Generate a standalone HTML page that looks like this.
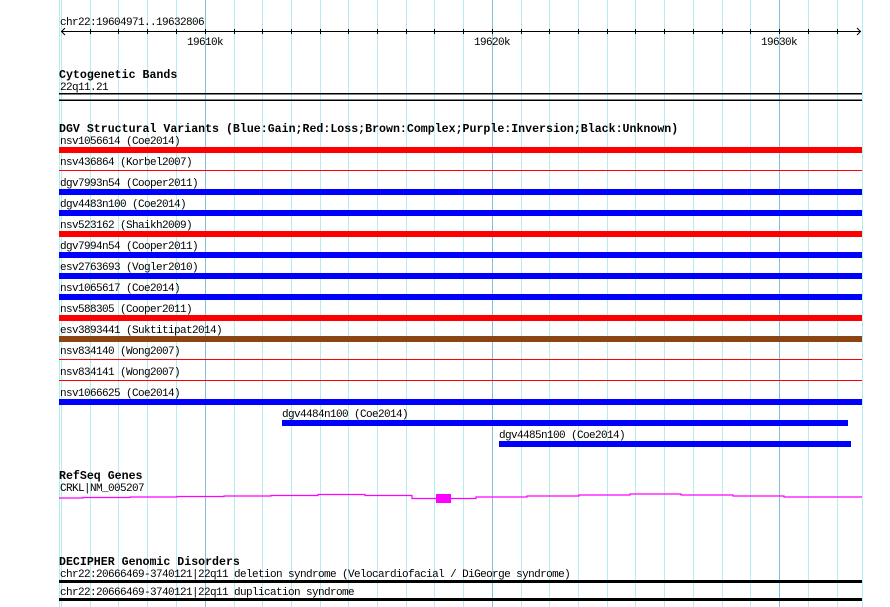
<!DOCTYPE html>
<html><head><meta charset="utf-8"><style>
html,body{margin:0;padding:0;background:#fff;width:890px;height:607px;overflow:hidden}
svg{display:block}
text{font-family:"Liberation Mono",monospace;font-size:11px;letter-spacing:-0.6px;fill:#000}
.b{font-weight:bold;font-size:11.6px;letter-spacing:0}
</style></head><body>
<svg width="890" height="607" xmlns="http://www.w3.org/2000/svg">
<g stroke="#b4ecf0" stroke-width="1">
<line x1="59.5" y1="0" x2="59.5" y2="607"/>
<line x1="61.5" y1="0" x2="61.5" y2="607"/>
<line x1="90.5" y1="0" x2="90.5" y2="607"/>
<line x1="118.5" y1="0" x2="118.5" y2="607"/>
<line x1="147.5" y1="0" x2="147.5" y2="607"/>
<line x1="176.5" y1="0" x2="176.5" y2="607"/>
<line x1="234.5" y1="0" x2="234.5" y2="607"/>
<line x1="262.5" y1="0" x2="262.5" y2="607"/>
<line x1="291.5" y1="0" x2="291.5" y2="607"/>
<line x1="320.5" y1="0" x2="320.5" y2="607"/>
<line x1="348.5" y1="0" x2="348.5" y2="607"/>
<line x1="377.5" y1="0" x2="377.5" y2="607"/>
<line x1="406.5" y1="0" x2="406.5" y2="607"/>
<line x1="434.5" y1="0" x2="434.5" y2="607"/>
<line x1="463.5" y1="0" x2="463.5" y2="607"/>
<line x1="521.5" y1="0" x2="521.5" y2="607"/>
<line x1="549.5" y1="0" x2="549.5" y2="607"/>
<line x1="578.5" y1="0" x2="578.5" y2="607"/>
<line x1="607.5" y1="0" x2="607.5" y2="607"/>
<line x1="635.5" y1="0" x2="635.5" y2="607"/>
<line x1="664.5" y1="0" x2="664.5" y2="607"/>
<line x1="693.5" y1="0" x2="693.5" y2="607"/>
<line x1="722.5" y1="0" x2="722.5" y2="607"/>
<line x1="750.5" y1="0" x2="750.5" y2="607"/>
<line x1="808.5" y1="0" x2="808.5" y2="607"/>
<line x1="837.5" y1="0" x2="837.5" y2="607"/>
<line x1="862.5" y1="0" x2="862.5" y2="607"/>
</g>
<g stroke="#80c0e0" stroke-width="1">
<line x1="205.5" y1="0" x2="205.5" y2="607"/>
<line x1="492.5" y1="0" x2="492.5" y2="607"/>
<line x1="779.5" y1="0" x2="779.5" y2="607"/>
</g>
<text x="60" y="25">chr22:19604971..19632806</text>
<g stroke="#000" stroke-width="1" fill="none">
<line x1="61" y1="31.5" x2="861" y2="31.5"/>
<polyline points="65,28 61.5,31.5 65,35"/>
<polyline points="857,28 860.5,31.5 857,35"/>
<path d="M90.5 29v5M118.5 29v5M147.5 29v5M176.5 29v5M205.5 29v5M234.5 29v5M262.5 29v5M291.5 29v5M320.5 29v5M348.5 29v5M377.5 29v5M406.5 29v5M434.5 29v5M463.5 29v5M492.5 29v5M521.5 29v5M549.5 29v5M578.5 29v5M607.5 29v5M635.5 29v5M664.5 29v5M693.5 29v5M722.5 29v5M750.5 29v5M779.5 29v5M808.5 29v5M837.5 29v5"/>
</g>
<text x="187" y="45">19610k</text>
<text x="474" y="45">19620k</text>
<text x="761" y="45">19630k</text>
<text class="b" x="59" y="78">Cytogenetic Bands</text>
<text x="60" y="90">22q11.21</text>
<rect x="59" y="93" width="803" height="1.5" fill="#000"/>
<rect x="59" y="99.5" width="803" height="1.5" fill="#000"/>
<text class="b" x="59" y="132">DGV Structural Variants (Blue:Gain;Red:Loss;Brown:Complex;Purple:Inversion;Black:Unknown)</text>
<text x="60" y="144">nsv1056614 (Coe2014)</text><rect x="59" y="147" width="803" height="6" fill="#f00"/>
<text x="60" y="165">nsv436864 (Korbel2007)</text><rect x="59" y="170" width="803" height="1" fill="#f00"/>
<text x="60" y="186">dgv7993n54 (Cooper2011)</text><rect x="59" y="189" width="803" height="6" fill="#00f"/>
<text x="60" y="207">dgv4483n100 (Coe2014)</text><rect x="59" y="210" width="803" height="6" fill="#00f"/>
<text x="60" y="228">nsv523162 (Shaikh2009)</text><rect x="59" y="231" width="803" height="6" fill="#f00"/>
<text x="60" y="249">dgv7994n54 (Cooper2011)</text><rect x="59" y="252" width="803" height="6" fill="#00f"/>
<text x="60" y="270">esv2763693 (Vogler2010)</text><rect x="59" y="273" width="803" height="6" fill="#00f"/>
<text x="60" y="291">nsv1065617 (Coe2014)</text><rect x="59" y="294" width="803" height="6" fill="#00f"/>
<text x="60" y="312">nsv588305 (Cooper2011)</text><rect x="59" y="315" width="803" height="6" fill="#f00"/>
<text x="60" y="333">esv3893441 (Suktitipat2014)</text><rect x="59" y="336" width="803" height="6" fill="#8b4513"/>
<text x="60" y="354">nsv834140 (Wong2007)</text><rect x="59" y="359" width="803" height="1" fill="#f00"/>
<text x="60" y="375">nsv834141 (Wong2007)</text><rect x="59" y="380" width="803" height="1" fill="#f00"/>
<text x="60" y="396">nsv1066625 (Coe2014)</text><rect x="59" y="399" width="803" height="6" fill="#00f"/>
<text x="282" y="417">dgv4484n100 (Coe2014)</text><rect x="282" y="420" width="566" height="6" fill="#00f"/>
<text x="499" y="438">dgv4485n100 (Coe2014)</text><rect x="499" y="441" width="352" height="6" fill="#00f"/>
<text class="b" x="59" y="479">RefSeq Genes</text>
<text x="60" y="491">CRKL|NM_005207</text>
<polyline fill="none" stroke="#f0f" stroke-width="1.2" points="59,498 83,498 83,497.5 130,497.5 130,497 177,497 177,496.5 224,496.5 224,496 271,496 271,495.5 318,495.5 318,494.5 365,494.5 365,495.5 412,495.5 412,498.5 436,498.5 451,498.5 476,498.5 476,497 527,497 527,496 579,496 579,495 630,495 630,494 681,494 681,495 733,495 733,496 784,496 784,497 862,497"/>
<rect x="436" y="494" width="15" height="9" fill="#f0f"/>
<text class="b" x="59" y="565">DECIPHER Genomic Disorders</text>
<text x="60" y="577">chr22:20666469-3740121|22q11 deletion syndrome (Velocardiofacial / DiGeorge syndrome)</text>
<rect x="59" y="580" width="803" height="3" fill="#000"/>
<text x="60" y="595">chr22:20666469-3740121|22q11 duplication syndrome</text>
<rect x="59" y="598" width="803" height="3" fill="#000"/>
</svg>
</body></html>
